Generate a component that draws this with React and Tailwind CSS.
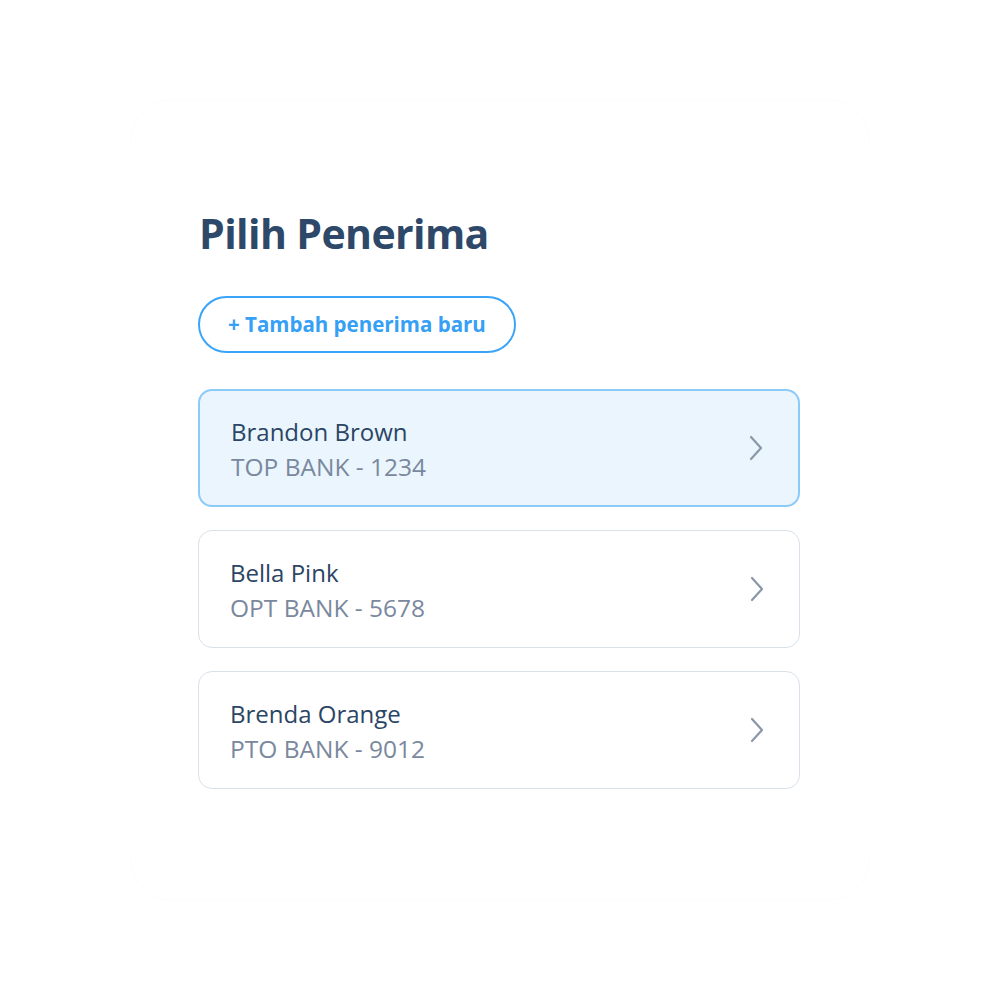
import React from 'react';

const recipients = [
  { name: 'Brandon Brown', bank: 'TOP BANK - 1234', active: true },
  { name: 'Bella Pink', bank: 'OPT BANK - 5678' },
  { name: 'Brenda Orange', bank: 'PTO BANK - 9012' },
];

const Chevron = () => (
  <svg width="16" height="26" viewBox="0 0 16 26" fill="none">
    <path d="M3 2 L13 13 L3 24" stroke="#8a97a9" strokeWidth="2.2" strokeLinecap="round" strokeLinejoin="round" />
  </svg>
);

const RecipientRow = ({ name, bank, active }) => (
  <div
    className={
      'h-[118px] rounded-[14px] flex items-center justify-between pl-[31px] pr-[34px] ' +
      (active ? 'bg-[#eaf5fe] border-2 border-[#8ccbf8]' : 'bg-white border border-[#d9e1ea]')
    }
  >
    <div className="flex flex-col pt-[1px]">
      <span className="text-[24px] leading-[35px] font-medium text-[#2b4564]">{name}</span>
      <span className="text-[24.5px] leading-[35px] text-[#7a889d]">{bank}</span>
    </div>
    <Chevron />
  </div>
);

export default function App() {
  return (
    <div className="w-[1000px] h-[1000px] bg-white flex items-start justify-center pt-[100px]" style={{ fontFamily: '"Open Sans", Lato, sans-serif' }}>
      <div className="w-[740px] h-[800px] rounded-[40px] border border-[#fdfdfd] bg-white pl-[67px] pr-[70px] pt-[102px]">
        <h1 className="pl-[1px] text-[41px] leading-[60px] font-bold text-[#2d4868] tracking-[-0.6px]">Pilih Penerima</h1>
        <button className="mt-[33px] h-[57px] px-[28px] rounded-full border-2 border-[#3ba4f6] text-[#35a0f5] text-[20.5px] font-bold">
          + Tambah penerima baru
        </button>
        <div className="mt-[36px] flex flex-col gap-[23px] w-[602px]">
          {recipients.map((r) => (
            <RecipientRow key={r.name} {...r} />
          ))}
        </div>
      </div>
    </div>
  );
}
